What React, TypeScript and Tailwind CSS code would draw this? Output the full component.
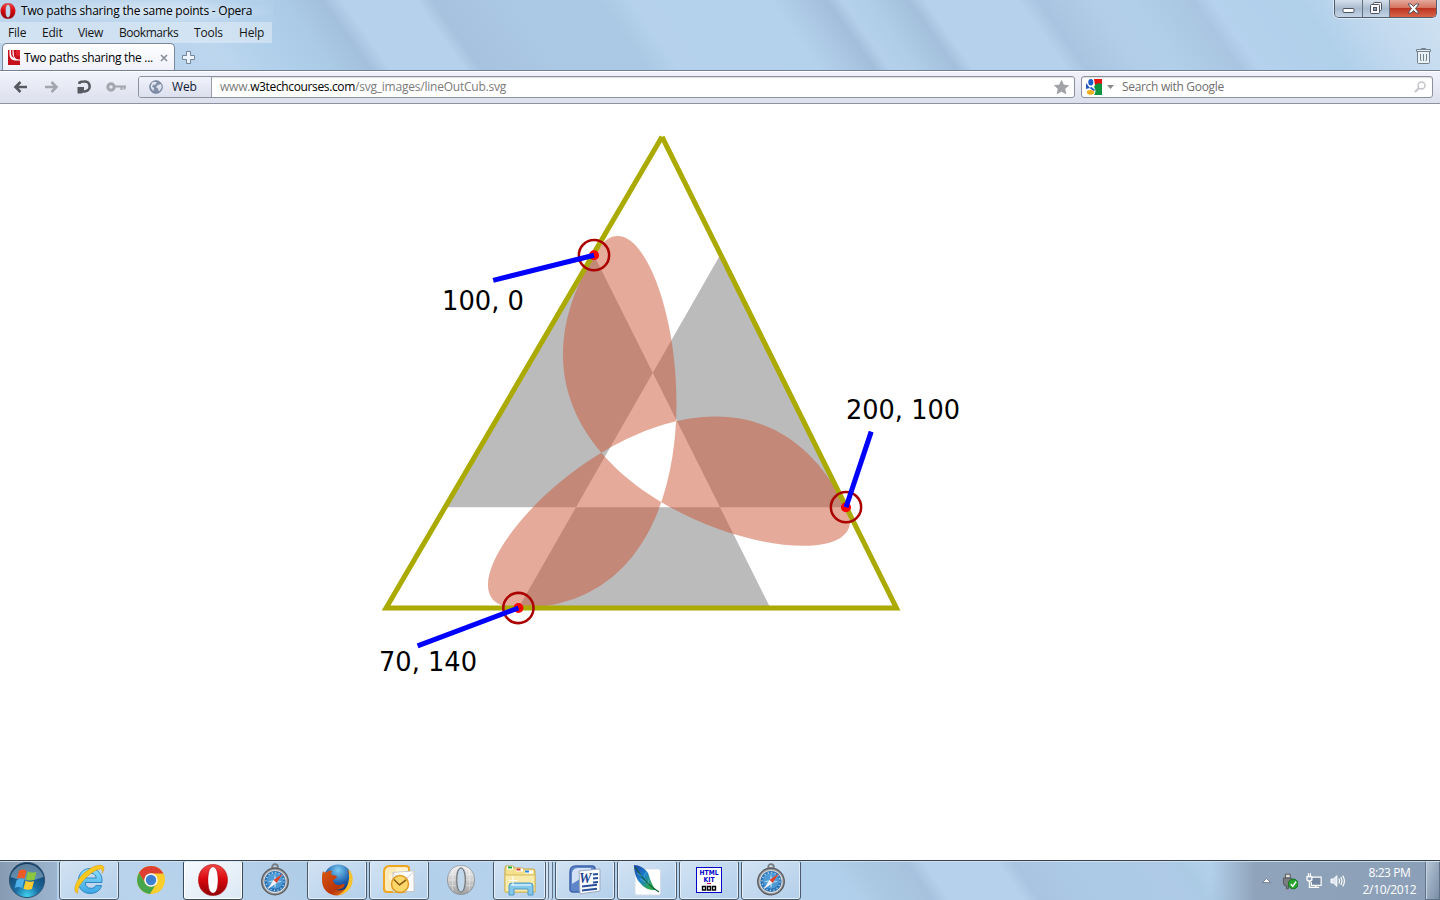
import type { ReactNode } from 'react';

const UI = "font-['Open_Sans','Noto_Sans',sans-serif]";

function Glass({ id, height, stops }: { id: string; height: number; stops: [number, string][] }) {
  return (
    <svg className="absolute inset-0" width="1440" height={height} aria-hidden="true">
      <defs>
        <linearGradient id={id} gradientUnits="userSpaceOnUse" x1="-100" y1="0" x2="1440" y2="0" gradientTransform="skewX(35)">
          {stops.map(([x, c], i) => (
            <stop key={i} offset={(x + 100) / 1540} stopColor={c} />
          ))}
        </linearGradient>
      </defs>
      <rect width="1440" height={height} fill={`url(#${id})`} />
    </svg>
  );
}

const TOP_STOPS: [number, string][] = [
  [-100, '#c3daee'], [60, '#b4d0ea'], [180, '#bcd6ee'], [240, '#b0cfea'], [285, '#aacae6'], [322, '#a3bfdc'], [342, '#b5d1ec'],
  [416, '#b5d1ec'], [432, '#a7c2de'], [520, '#abc8e4'], [600, '#abc9e4'], [630, '#b5d1ec'],
  [770, '#b5d2ed'], [826, '#a3bedb'], [842, '#b4d0eb'], [870, '#b0cde8'], [908, '#a3bfdb'], [925, '#b5d1ec'],
  [1018, '#b5d1ec'], [1038, '#a9c4e0'], [1090, '#b2cde8'], [1130, '#b2cfe9'], [1192, '#a9c5e1'], [1212, '#b5d1ed'], [1300, '#b0d0ea'],
  [1350, '#c0d8ee'], [1440, '#d0e2f2'],
];

const TASK_STOPS: [number, string][] = [
  [-100, '#b0cde8'], [120, '#b9d3ec'], [330, '#aecbe6'], [450, '#b5d1ec'], [780, '#b1d0eb'], [832, '#b0cfea'], [855, '#abc9e3'], [905, '#a7c2de'],
  [922, '#b5d1ec'], [995, '#b5d1ec'], [1012, '#a9c4e0'], [1070, '#acc9e5'], [1160, '#aecae7'], [1180, '#abcbe5'], [1205, '#b3d0eb'], [1440, '#b3d0eb'],
];

function OperaO({ w, h, silver = false }: { w: number; h: number; silver?: boolean }) {
  const id = silver ? 'opSilver' : 'opRed' + w;
  return (
    <svg width={w} height={h} viewBox="0 0 30 32">
      <defs>
        <linearGradient id={id} x1="0" y1="0" x2="0" y2="1">
          <stop offset="0" stopColor={silver ? '#f4f4f4' : '#f04a48'} />
          <stop offset=".45" stopColor={silver ? '#d2d2d2' : '#dc0a10'} />
          <stop offset="1" stopColor={silver ? '#a2a2a2' : '#8d0006'} />
        </linearGradient>
      </defs>
      <path
        fill={`url(#${id})`}
        fillRule="evenodd"
        stroke={silver ? '#777' : '#b0060a'}
        strokeWidth=".6"
        d="M15 .5C24 .5 29.500 7.500 29.500 16S24 31.500 15 31.500.5 24.500.5 16 6 .5 15 .5ZM15 3C11 3 10 9 10 16s1 13 5 13 5-6 5-13S19 3 15 3Z"
      />
      {silver && <path d="M2 10H10M1 16H10M2 22H10M20 10H28M20 16H29M20 22H28M6 4V28M24 4V28" stroke="#fff" strokeOpacity=".6" strokeWidth=".6" />}
      {silver && <ellipse cx="15" cy="16" rx="4.500" ry="13" fill="#c3d7ea" stroke="#6a6a6a" />}
      {!silver && w > 20 && <ellipse cx="15" cy="16" rx="4.500" ry="12.800" fill="#fff" />}
    </svg>
  );
}

function Safari() {
  return (
    <svg width="30" height="34" viewBox="0 0 30 34">
      <circle cx="15" cy="4" r="2.800" fill="none" stroke="#77797c" strokeWidth="1.800" />
      <rect x="12.500" y="4" width="5" height="4" fill="#999b9e" />
      <circle cx="15" cy="18.500" r="13.300" fill="#97999c" stroke="#5a5b5e" strokeWidth="1.300" />
      <circle cx="15" cy="18.500" r="11.600" fill="#d9dadb" />
      <circle cx="15" cy="18.500" r="10.600" fill="#2b74b6" />
      <circle cx="15" cy="17.500" r="8" fill="#4e9ad4" />
      <circle cx="15" cy="18.500" r="9" fill="none" stroke="#c9e0f2" strokeWidth="1.400" strokeDasharray="1 2.530" />
      <path d="M15 11l1.500 6L22.500 18.500l-6 1.500L15 26l-1.500-6L7.500 18.500l6-1.500Z" fill="#9ccaea" />
      <path d="M23 10.500 16.500 20 13.500 17Z" fill="#e5422a" />
      <path d="M7.500 26.500 13.500 17 16.500 20Z" fill="#f2f4f6" />
    </svg>
  );
}

function IE() {
  return (
    <svg width="34" height="34" viewBox="0 0 34 34">
      <defs>
        <linearGradient id="ie" x1="0" y1="0" x2="0" y2="1">
          <stop offset="0" stopColor="#8fe0fc" />
          <stop offset="1" stopColor="#3aa5e4" />
        </linearGradient>
      </defs>
      <path
        d="M18 5.500c8 0 12.800 5.800 12 14H13.200c.3 3.800 2.500 5.800 5.800 5.800 2.400 0 3.900-.9 4.800-2.700h5.800c-1.500 5-5.600 7.900-11.200 7.900-7.300 0-12.100-4.800-12.100-12.200C6.300 10.500 11.200 5.500 18 5.500ZM13.400 15h10.900c-.5-3-2.500-4.800-5.300-4.800S14.100 12 13.400 15Z"
        fill="url(#ie)"
        stroke="#1876b8"
        strokeWidth=".8"
      />
      <path d="M5.500 30.500C0 28 3.500 18 11.500 10.500 19 3.500 29 0 31.500 3.500c1 1.600.2 4.400-1.200 6.800 .4-2.800 0-4.300-1.800-4.300C22.500 6 9 17.500 6.300 25.500c-.7 2-.6 3.600-.8 5Z" fill="#fbc81e" stroke="#d9930a" strokeWidth=".5" />
    </svg>
  );
}

function Chrome() {
  return (
    <svg width="30" height="30" viewBox="0 0 30 30">
      <circle cx="15" cy="15" r="14" fill="#f9cd2b" />
      <path d="M2.900 8A14 14 0 0 1 27.500 8.500H15A6.500 6.500 0 0 0 9.300 18.300Z" fill="#dd3f31" />
      <path d="M2.900 8A14 14 0 0 0 14 29L20.600 18.300A6.500 6.500 0 0 1 9.300 18.300Z" fill="#47a64b" />
      <circle cx="15" cy="15" r="6.700" fill="#f5f7f9" />
      <circle cx="15" cy="15" r="5.200" fill="#3f7fd0" />
    </svg>
  );
}

function Firefox() {
  return (
    <svg width="34" height="34" viewBox="0 0 34 34">
      <defs>
        <radialGradient id="ffb" cx=".5" cy=".2" r=".8">
          <stop offset="0" stopColor="#7ccbf3" />
          <stop offset=".6" stopColor="#1b5bab" />
          <stop offset="1" stopColor="#0c2a6b" />
        </radialGradient>
        <linearGradient id="ffo" x1="0" y1="0" x2="1" y2="1">
          <stop offset="0" stopColor="#d9590f" />
          <stop offset=".6" stopColor="#b93507" />
          <stop offset="1" stopColor="#f0921d" />
        </linearGradient>
      </defs>
      <circle cx="18" cy="15.500" r="14" fill="url(#ffb)" />
      <path d="M3 8c1 1 1.500 1.500 3 1.500C8 8 10 7.500 12 8c-1 1.500-1 3 0 4 2 .4 4 .4 5 1.500-.5 2-3 2.500-4 4 .5 3.500 4.500 5.500 8 4 2-1 4-.5 3.500 1-1 3-5.500 4.500-9 4 6 2.500 12.500-.5 14-7 1-4.500-.5-9-2.500-12.500 4.500 4 5 10 3 15.500C27.500 29 22.500 32.500 17 32.500 8.500 32.500 2 26 2 17.500 2 14 2 11 3 8Z" fill="url(#ffo)" />
      <path d="M28.500 6c5 5 5.200 12.500 2.500 17.500C27.500 29.500 22 32 18 31.800 26 29 31 19 28.500 6Z" fill="#fcc22f" />
    </svg>
  );
}

function Outlook() {
  return (
    <svg width="34" height="32" viewBox="0 0 34 32">
      <path d="M8 2h16q3 0 3 3v17q0 6-6 6H5q-3 0-3-3V8q0-6 6-6Z" fill="#fdeab9" stroke="#efa51f" strokeWidth="2" />
      <path d="M14 4h12v7H14zM7 10h7v6H7z" fill="#fff4cf" />
      <path d="M11 8.500 32 7v20.500L11 28Z" fill="#fdfdfd" stroke="#c5c5c5" />
      <path d="M11 9 21 18 32 7.500" fill="#fff" stroke="#d0d0d0" />
      <circle cx="18" cy="20" r="8.500" fill="#fcd76a" stroke="#dd9a25" strokeWidth="1.500" />
      <path d="M12 15.500 17.500 21l6.500-5" fill="none" stroke="#8e6018" strokeWidth="1.600" />
    </svg>
  );
}

function Explorer() {
  return (
    <svg width="34" height="32" viewBox="0 0 34 32">
      <path d="M2 4q0-2 2-2h5q2 0 2 2h8q1 0 1 1h10q2 0 2 2v21H2Z" fill="#f4df8b" stroke="#c6a53e" />
      <path d="M4 4h6M13 6h7M22 8h8" stroke="#fff" strokeWidth="3" />
      <path d="M5 3.500h4" stroke="#1aa83a" strokeWidth="2" />
      <path d="M13.500 5.500h4" stroke="#d43b25" strokeWidth="2" />
      <path d="M22 7.500h4" stroke="#2688d8" strokeWidth="2" />
      <path d="M2 11h30v17H2Z" fill="#f9ebac" stroke="#d7bb5c" />
      <path d="M6 31V22q0-3 3-3h18q3 0 3 3v9h-5v-6H11v6Z" fill="#83c8ea" stroke="#4c98c4" />
      <path d="M8 21h20" stroke="#d5f0fc" strokeWidth="1.500" />
      <path d="M10 12v9M5.500 16.500h9" stroke="#fff" strokeWidth="1" />
    </svg>
  );
}

function Word() {
  return (
    <svg width="34" height="32" viewBox="0 0 34 32">
      <path d="M8 2h16q3 0 3 3v17q0 6-6 6H5q-3 0-3-3V8q0-6 6-6Z" fill="#5f86c8" stroke="#3e63ab" strokeWidth="1.500" />
      <path d="M4 9q1-5 6-5h13v4L4 20Z" fill="#d3e1f6" />
      <path d="M11 7 32 5v22l-20 3Z" fill="#fbfcfe" stroke="#9daac2" />
      <path d="M25 10.500l5-.5M25 14.500l5-.5M25 18.500l5-.5M14 22.500l15-1.800M14 26.500l15-1.800" stroke="#2a4f9a" strokeWidth="2" />
      <text x="11" y="19" fontSize="14" fontWeight="bold" fontStyle="italic" fontFamily="Liberation Serif, serif" fill="#1f4593">W</text>
    </svg>
  );
}

function Feather() {
  return (
    <svg width="30" height="32" viewBox="0 0 30 32">
      <defs>
        <linearGradient id="fea" x1="0" y1="0" x2="1" y2="1">
          <stop offset="0" stopColor="#1b3fa5" />
          <stop offset=".45" stopColor="#1d82c9" />
          <stop offset=".8" stopColor="#2fa552" />
        </linearGradient>
      </defs>
      <rect x="3" y="5" width="25.500" height="26" rx="2" fill="#fff" stroke="#d5dce4" />
      <path d="M2 1c5 0 11 3 14 8 2 5 3 11 8 17-5 .5-11-1-15-6C4 15 2 8 2 1Z" fill="url(#fea)" />
      <path d="M3 3c5 8 12 18 24 25" fill="none" stroke="#0f5c3c" strokeWidth="1.200" />
      <path d="M5 9l5 3M8 15l6 3M14 8l-2 5M17 15l-1 5" stroke="#5cb9e2" strokeWidth=".6" />
    </svg>
  );
}

function HtmlKit() {
  return (
    <svg width="26" height="26" viewBox="0 0 26 26">
      <rect x=".5" y=".5" width="25" height="25" fill="#fff" stroke="#0000c8" />
      <g fontFamily="DejaVu Sans, sans-serif" fontWeight="bold" textAnchor="middle">
        <text x="13" y="8" fontSize="7" textLength="19" lengthAdjust="spacingAndGlyphs" fill="#0000c8">HTML</text>
        <text x="13" y="14.500" fontSize="7" textLength="11" lengthAdjust="spacingAndGlyphs" fill="#0000c8">KIT</text>
      </g>
      <path d="M11 16.500h4" stroke="#c00060" />
      <path d="M6.500 19.500h3v3.500h-3zM11.500 19.500h3v3.500h-3zM16.500 19.500h3v3.500h-3z" fill="none" stroke="#000" strokeWidth="1.400" />
    </svg>
  );
}

function StartOrb() {
  return (
    <svg width="38" height="38" viewBox="0 0 38 38">
      <defs>
        <radialGradient id="orb" cx=".5" cy=".95" r=".85">
          <stop offset="0" stopColor="#3fd3f0" />
          <stop offset=".4" stopColor="#1b6fa5" />
          <stop offset="1" stopColor="#143d64" />
        </radialGradient>
      </defs>
      <circle cx="19" cy="19" r="17.600" fill="url(#orb)" stroke="#31536f" />
      <path d="M2.500 16A17 17 0 0 1 35.500 16Q19 23 2.500 16Z" fill="#b9d5e6" opacity=".45" />
      <path d="M11 9.500q4-2 7.500 0l-2 8q-3.500-1.700-7.500 0Z" fill="#ee5a25" />
      <path d="M19.800 10.500q4 2 8.700.2l-2 8q-4.500 1.700-8.500-.2Z" fill="#8bc63f" />
      <path d="M8.700 19q4-1.800 7.500 0l-2 8q-3.700-2-7.500 0Z" fill="#4fb1ea" />
      <path d="M17.500 19.700q4 2 8.500.2l-2 8q-4.500 1.700-8.500-.2Z" fill="#fdcb2f" />
    </svg>
  );
}

function TaskSlot({ children, framed = false, active = false }: { children: ReactNode; framed?: boolean; active?: boolean }) {
  const frame = active
    ? 'rounded-[3px] border border-[#3c4a59] bg-gradient-to-br from-[#f6fafd] to-[#dbe8f5] shadow-[inset_0_0_0_1px_#ffffff]'
    : framed
      ? 'rounded-[3px] border border-[#4a5a6b] bg-gradient-to-br from-[#d2e3f3] to-[#b3cfea] shadow-[inset_0_0_0_1px_#e3eef8]'
      : '';
  return <div className={`flex h-10 w-[60px] items-center justify-center ${frame}`}>{children}</div>;
}

function TitleBar() {
  return (
    <div className="flex h-[22px] items-start justify-between">
      <div className="flex h-[22px] items-center bg-[radial-gradient(ellipse_at_center,rgba(255,255,255,0.45),rgba(255,255,255,0.05)_75%)] pr-4">
        <OperaO w={16} h={16} />
        <span className="ml-[5px] w-[236px] text-[12px] tracking-[-0.22px] text-black">Two paths sharing the same points - Opera</span>
      </div>
      <div className="mr-[3px] flex h-[18px] overflow-hidden rounded-b-[5px] border border-t-0 border-[#535e6c] shadow-[0_0_0_1px_#dceaf6]">
        <div className="flex w-7 items-center justify-center border-r border-[#65717f] bg-gradient-to-b from-[#d5e0eb] via-[#a9bbcf] to-[#c3d4e6]">
          <svg className="mt-[3px]" width="13" height="7"><rect x="1" y="1.500" width="11" height="4" rx="1" fill="#fff" stroke="#4c5361" /></svg>
        </div>
        <div className="flex w-[27px] items-center justify-center border-r border-[#65717f] bg-gradient-to-b from-[#d5e0eb] via-[#a9bbcf] to-[#c3d4e6]">
          <svg className="-mt-[2px]" width="13" height="12" fill="#f8f8fa" stroke="#4c5361">
            <rect x="3.500" y=".5" width="8" height="8" rx="1" />
            <rect x=".5" y="2.500" width="9" height="9" rx="1" />
            <rect x="3.500" y="5.500" width="3" height="3" fill="#8ea0b5" />
          </svg>
        </div>
        <div className="flex w-[46px] items-center justify-center bg-[linear-gradient(#e5a99c,#d4745f_45%,#bd3520_50%,#d9654a)]">
          <svg className="-mt-px" width="13" height="11" viewBox="0 0 13 11">
            <path d="M1 1h3l2.500 2.500L9 1h3L8.500 5.500 12 10H9L6.500 7.500 4 10H1l3.500-4.500Z" fill="#fff" stroke="#535767" />
          </svg>
        </div>
      </div>
    </div>
  );
}

function MenuBar() {
  return (
    <div className="flex h-[21px] w-[272px] items-center bg-white/35 pt-px pl-2 text-[12px] text-[#151515]">
      <span className="w-[34px] tracking-[-0.2px]">File</span>
      <span className="w-9 tracking-[-0.2px]">Edit</span>
      <span className="w-[41px] tracking-[-0.3px]">View</span>
      <span className="w-[75px] tracking-[-0.45px]">Bookmarks</span>
      <span className="w-[45px] tracking-[-0.2px]">Tools</span>
      <span className="tracking-[-0.2px]">Help</span>
    </div>
  );
}

function TabBar() {
  return (
    <div className="flex h-[27px] items-end justify-between">
      <div className="flex items-end">
        <div className="ml-[2px] flex h-[27px] w-[173px] items-center rounded-t-[5px] border border-b-0 border-[#7a8798] bg-gradient-to-b from-white to-[#eff1fa] pt-px pl-[4px]">
          <svg width="14" height="15" viewBox="0 0 14 15">
            <rect x="1" width="12" height="15" fill="#c4111c" />
            <path d="M2.500 0v5q.5 5 5.500 5.500H13V9.500Q8.500 10 7 6L6.500 0Z" fill="#fff" />
            <path d="M4 0h1.500v4.500L7 8Q4 7 4 3Z" fill="#c4111c" />
            <path d="M9 0h4v6q-3 1-4-2Z" fill="#e0242b" />
          </svg>
          <span className="ml-[3px] w-[136px] text-[12px] tracking-[-0.3px] whitespace-nowrap text-black">Two paths sharing the ...</span>
          <svg width="8" height="8" viewBox="0 0 8 8"><path d="M1 1l6 6M7 1 1 7" stroke="#8b8f98" strokeWidth="1.700" /></svg>
        </div>
        <svg className="mb-[6px] ml-[7px]" width="13" height="13" viewBox="0 0 13 13">
          <path d="M4.500.5h4v4h4v4h-4v4h-4v-4h-4v-4h4Z" fill="#eef4fb" stroke="#75869b" />
        </svg>
      </div>
      <svg className="mr-[9px] mb-[6px]" width="15" height="16" viewBox="0 0 15 16" fill="#e8f0f8" stroke="#75808d">
        <path d="M1.500 3.500h12v11q0 1-1 1h-10q-1 0-1-1Z" />
        <path d="M.5 1.500h14v2H.5Z" />
        <path d="M5.500 1v-.5h4V1M4.500 6v6l1 1M7.500 6v7M10.500 6v6l-1 1" fill="none" />
      </svg>
    </div>
  );
}

function AddressBar() {
  return (
    <div className="flex h-[34px] items-center border-t border-b border-t-[#748195] border-b-[#8f91a0] bg-gradient-to-b from-[#f2f3fc] to-[#dcdfec] pr-[7px] pl-[13px] shadow-[inset_0_1px_0_#ffffff]">
      <svg width="114" height="16" viewBox="0 0 114 16" fill="none">
        <path d="M14 8H3M7.500 3 2.500 8l5 5" stroke="#575960" strokeWidth="2.600" />
        <path d="M32 8h11M38.500 3l5 5-5 5" stroke="#a4a6ae" strokeWidth="2.600" />
        <path d="M66.500 5V3.500Q68 2.500 71 2.500A4.900 4.900 0 0 1 72.500 12.200Q71 12.700 69 12.300" stroke="#575960" strokeWidth="2.600" />
        <path d="M64.500 14.500V8H71v3l-2 3.500Z" fill="#575960" />
        <circle cx="98" cy="8" r="3.200" stroke="#a4a6ae" strokeWidth="3" />
        <path d="M102 7.500h11M108.500 8v3M111.500 8v2.500" stroke="#a4a6ae" strokeWidth="2" />
      </svg>
      <div className="ml-[11px] flex h-[22px] w-[937px] overflow-hidden rounded-[3px] border border-[#8d919e] bg-white">
        <div className="flex w-[73px] items-center border-r border-[#9a9eab] bg-gradient-to-b from-[#f0f2fb] to-[#dcdfed] pl-[10px]">
          <svg width="14" height="14" viewBox="0 0 14 14">
            <circle cx="7" cy="7" r="6.300" fill="#8190a8" stroke="#66758e" strokeWidth=".8" />
            <path d="M3 2.500Q6 1 8 2.500L6 5 4.500 4.500 3 6.500l2 1.500-.5 3Q2 9 1.500 6.500ZM9 5l3-1q1.500 3 0 5l-2 2.500-1-3L7 7Z" fill="#dfe5ef" />
          </svg>
          <span className="ml-[9px] text-[12px] tracking-[-0.1px] text-[#101a33]">Web</span>
        </div>
        <div className="flex flex-1 items-center justify-between pr-[5px] pl-2 text-[12px] shadow-[inset_0_1px_1px_#dcdde2]">
          <span className="tracking-[-0.22px] text-[#7b7b7b]">www.<span className="tracking-[-0.36px] text-black">w3techcourses.com</span>/svg_images/lineOutCub.svg</span>
          <svg width="15" height="14" viewBox="0 0 15 14"><path d="M7.500.5l2 4.500 5 .5-3.700 3.300 1 4.900-4.300-2.500-4.300 2.500 1-4.900L.5 5.500l5-.5Z" fill="#a1a3a8" stroke="#8d8f94" strokeWidth=".6" /></svg>
        </div>
      </div>
      <div className="ml-[6px] flex h-[22px] flex-1 items-center rounded-[3px] border border-[#8d919e] bg-white pr-[6px] pl-[4px] shadow-[inset_0_1px_1px_#dcdde2]">
        <svg width="16" height="16" viewBox="0 0 16 16">
          <path d="M8 0h8v6H9Z" fill="#e8120c" />
          <path d="M9 6Q12 3 16 5v11H8Q11 12 8 8Z" fill="#0f9440" />
          <path d="M0 4v6l4-1Z" fill="#2557bb" />
          <ellipse cx="4.800" cy="3.300" rx="2.500" ry="3.300" fill="#1c5dc9" />
          <path d="M4.500 8.500l4 3" stroke="#1c5dc9" strokeWidth="1.800" />
          <ellipse cx="4.500" cy="13.300" rx="3.600" ry="2.400" fill="#f2ae1d" />
        </svg>
        <svg className="ml-[5px]" width="7" height="4"><path d="M0 0h7L3.500 4Z" fill="#8a8a8a" /></svg>
        <span className="ml-[8px] flex-1 text-[12px] tracking-[-0.32px] text-[#6f6f6f]">Search with Google</span>
        <svg width="12" height="12" viewBox="0 0 12 12" fill="none" stroke="#c3c5ca"><circle cx="7.500" cy="4.500" r="3.500" strokeWidth="1.500" /><path d="M5 7 1 11" strokeWidth="2.200" /></svg>
      </div>
    </div>
  );
}

const POINTS = [[100, 0], [200, 100], [70, 140]];

function Diagram() {
  return (
    <svg className="block" width="1440" height="756" viewBox="0 104 1440 756">
      <g transform="translate(342 255.200) scale(2.52)">
        <path d="M100 0 170 140H70L150 0l50 100H40Z" fill="#bbb" fillRule="evenodd" />
        <path d="M100 0C127-47 170 140 70 140 17.500 140 150 0 200 100 220 140 40 100 100 0Z" fill="#c53" fillOpacity=".5" fillRule="evenodd" />
        <path d="M127-47 17.500 140H220L127-47" fill="none" stroke="#aa0" strokeWidth="2" />
        {POINTS.map(([x, y]) => (
          <g key={x}>
            <circle cx={x} cy={y} r="2" fill="red" />
            <circle cx={x} cy={y} r="6" fill="none" stroke="#a00" />
          </g>
        ))}
        <path d="M100 0 60 10M200 100l10-30M70 140l-40 15" stroke="#00f" strokeWidth="2" />
      </g>
      <g fontFamily="DejaVu Sans, sans-serif" fontSize="25.800">
        <text x="442" y="309.800" textLength="82" lengthAdjust="spacingAndGlyphs">100, 0</text>
        <text x="846" y="418.800" textLength="114" lengthAdjust="spacingAndGlyphs">200, 100</text>
        <text x="379" y="670.800" textLength="98" lengthAdjust="spacingAndGlyphs">70, 140</text>
      </g>
    </svg>
  );
}

function Tray() {
  return (
    <div className="flex h-10 w-[230px] items-center bg-gradient-to-r from-transparent via-[#8fa3ba] via-20% to-[#8ba0b8]">
      <svg className="ml-[52px]" width="9" height="5"><path d="M.5 4.500h8L4.500.5Z" fill="#fff" stroke="#4c5968" strokeWidth=".6" /></svg>
      <svg className="mt-[2px] ml-[11px]" width="17" height="17" viewBox="0 0 17 17">
        <path d="M3.500 1h5v4h-5z" fill="#ddd" stroke="#555" />
        <path d="M1.500 5h8v5q0 3-3 3v3h-2v-3q-3 0-3-3Z" fill="#7b7d80" stroke="#55575a" />
        <circle cx="11.500" cy="11" r="5" fill="#28a52d" stroke="#12721c" />
        <path d="M9 11l2 2.500 3.500-5" fill="none" stroke="#fff" strokeWidth="1.500" />
      </svg>
      <svg className="mt-px ml-[8px]" width="17" height="16" viewBox="0 0 17 16" fill="none">
        <path d="M6 4h9.500v8.500H5.500V9" fill="#7487a0" stroke="#fff" strokeWidth="1.200" />
        <path d="M1 3.500h5V7L4.500 8h-2L1 7ZM2.500 0v3M4.500 0v3M3.500 8v6.500h10M10 12.500v2" stroke="#fff" strokeWidth="1.300" />
      </svg>
      <svg className="mt-px ml-[7px]" width="16" height="14" viewBox="0 0 16 14" fill="none" stroke="#fff">
        <path d="M1 5h2.500L7 1.500v11L3.500 9H1Z" fill="#dfe6ee" />
        <path d="M9 4.500q1.500 2.500 0 5M11 3q2.500 4 0 8M13 1.500q3.500 5.500 0 11" strokeWidth="1.200" />
      </svg>
      <div className="mt-[2px] ml-[17px] flex-1 text-center text-[12px] leading-[17px] tracking-[-0.45px] whitespace-nowrap text-white">
        <div>8:23 PM</div>
        <div className="tracking-[-0.35px]">2/10/2012</div>
      </div>
      <div className="ml-[9px] h-10 w-[15px] border border-[#5f7389] bg-gradient-to-br from-[#b9c8d8] to-[#788da6] shadow-[inset_1px_1px_0_#c4d2e0]" />
    </div>
  );
}

function Taskbar() {
  return (
    <div className="relative h-10 overflow-hidden">
      <Glass id="taskGlass" height={40} stops={TASK_STOPS} />
      <div className="relative flex h-10 justify-between">
        <div className="flex gap-[2px]">
          <div className="flex w-[57px] items-center bg-gradient-to-r from-[#879cb3] to-[#9db5cf] pl-2"><StartOrb /></div>
          <TaskSlot framed><IE /></TaskSlot>
          <TaskSlot><Chrome /></TaskSlot>
          <TaskSlot active><OperaO w={30} h={32} /></TaskSlot>
          <TaskSlot><Safari /></TaskSlot>
          <TaskSlot framed><Firefox /></TaskSlot>
          <TaskSlot framed><Outlook /></TaskSlot>
          <TaskSlot><OperaO w={28} h={30} silver /></TaskSlot>
          <div className="flex w-[60px]">
            <div className="flex w-[53px] items-center justify-center rounded-[3px] border border-[#4a5a6b] bg-gradient-to-br from-[#d2e3f3] to-[#b3cfea] shadow-[inset_0_0_0_1px_#e3eef8]"><Explorer /></div>
            <div className="w-[3px] rounded-r-[3px] border-r border-[#627388] bg-[#d2e3f3]" />
            <div className="w-1 rounded-r-[3px] border-r border-[#627388] bg-[#c3d8ed]" />
          </div>
          <TaskSlot framed><Word /></TaskSlot>
          <TaskSlot framed><Feather /></TaskSlot>
          <TaskSlot framed><HtmlKit /></TaskSlot>
          <TaskSlot framed><Safari /></TaskSlot>
        </div>
        <Tray />
      </div>
      <div className="absolute inset-x-0 top-0 h-[2px] border-t border-[#36434f] bg-[#d6e5f3]/80" />
    </div>
  );
}

export default function App() {
  return (
    <div className={`flex h-[900px] w-[1440px] flex-col overflow-hidden bg-white ${UI}`}>
      <header className="relative h-[104px]">
        <Glass id="topGlass" height={104} stops={TOP_STOPS} />
        <div className="relative">
          <TitleBar />
          <MenuBar />
          <TabBar />
          <AddressBar />
        </div>
      </header>
      <main className="h-[756px]">
        <Diagram />
      </main>
      <Taskbar />
    </div>
  );
}
